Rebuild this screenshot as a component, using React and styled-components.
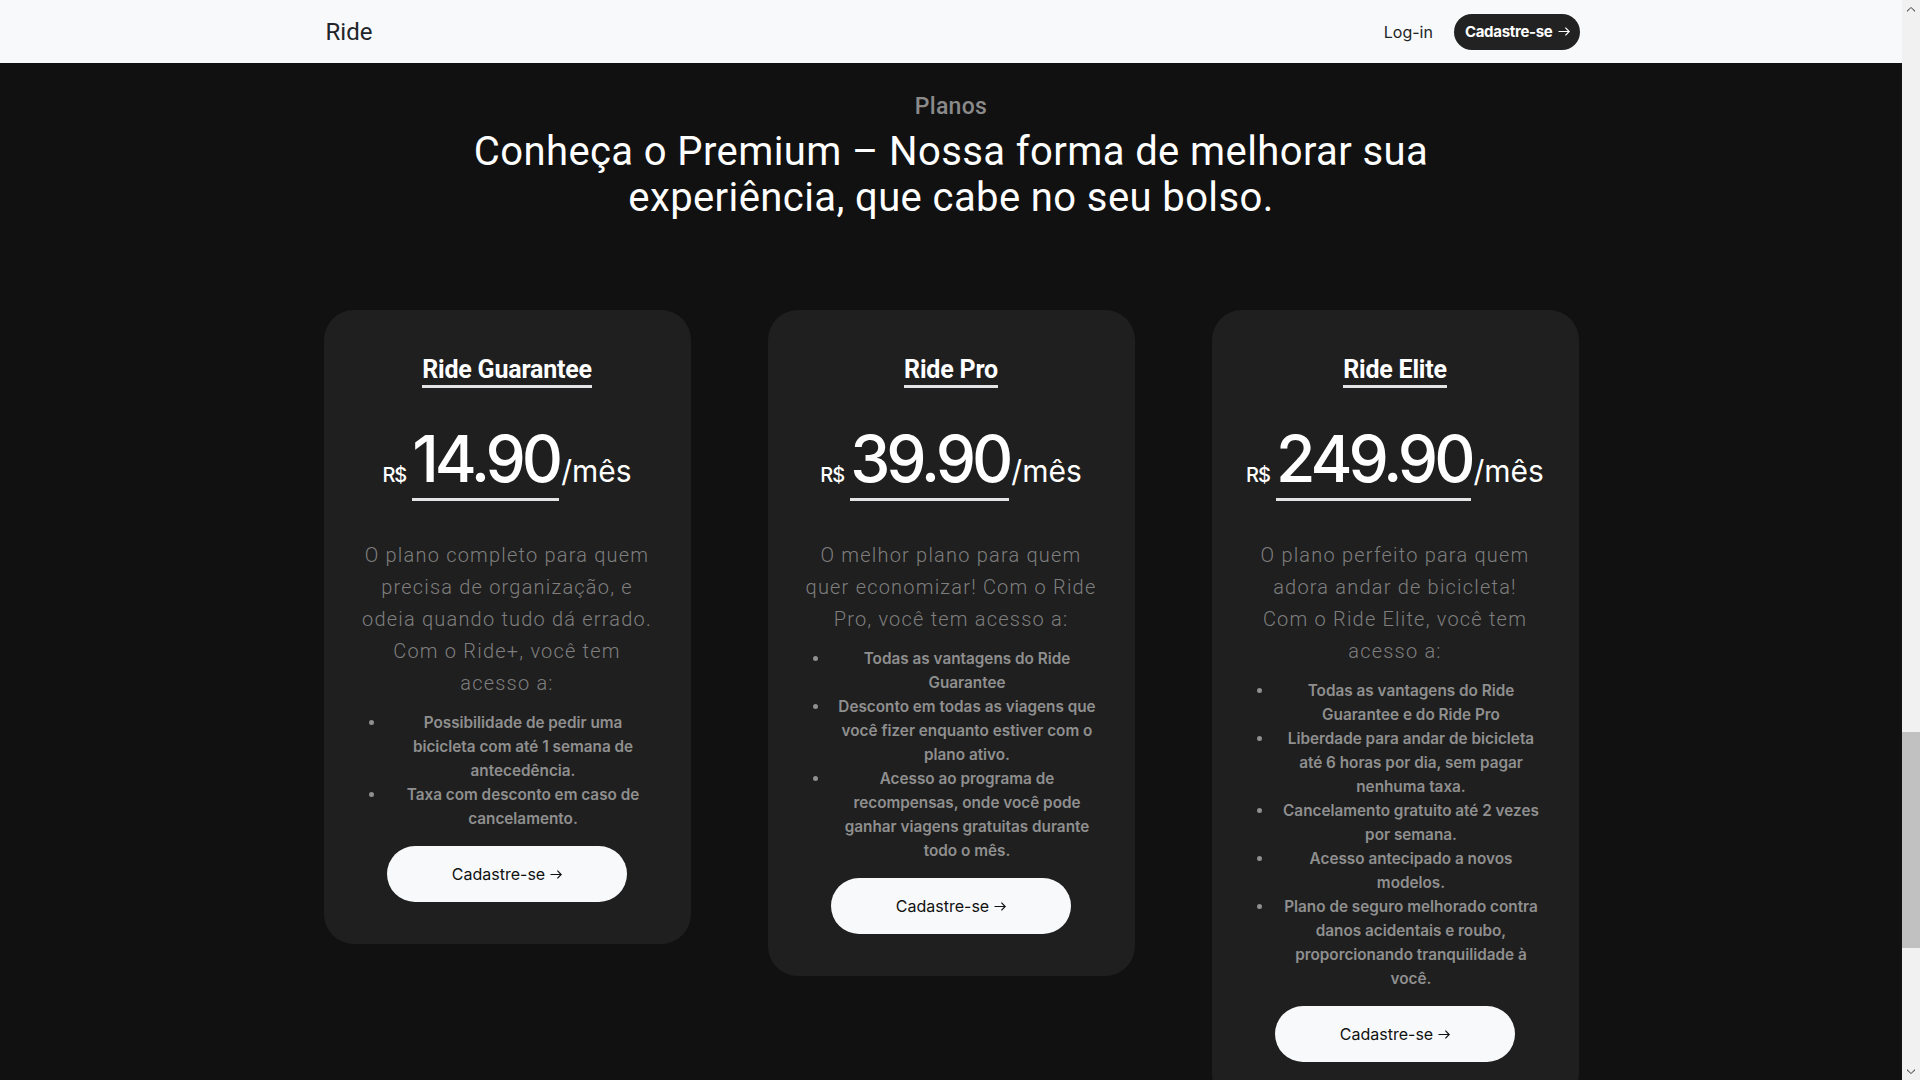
import React from "react";
import styled, { createGlobalStyle } from "styled-components";

// texto quebrado linha a linha, como no layout aprovado
const plans = [
  {
    name: "Ride Guarantee",
    price: "14.90",
    description: [
      "O plano completo para quem",
      "precisa de organização, e",
      "odeia quando tudo dá errado.",
      "Com o Ride+, você tem",
      "acesso a:",
    ],
    perks: [
      ["Possibilidade de pedir uma", "bicicleta com até 1 semana de", "antecedência."],
      ["Taxa com desconto em caso de", "cancelamento."],
    ],
  },
  {
    name: "Ride Pro",
    price: "39.90",
    description: [
      "O melhor plano para quem",
      "quer economizar! Com o Ride",
      "Pro, você tem acesso a:",
    ],
    perks: [
      ["Todas as vantagens do Ride", "Guarantee"],
      ["Desconto em todas as viagens que", "você fizer enquanto estiver com o", "plano ativo."],
      [
        "Acesso ao programa de",
        "recompensas, onde você pode",
        "ganhar viagens gratuitas durante",
        "todo o mês.",
      ],
    ],
  },
  {
    name: "Ride Elite",
    price: "249.90",
    description: [
      "O plano perfeito para quem",
      "adora andar de bicicleta!",
      "Com o Ride Elite, você tem",
      "acesso a:",
    ],
    perks: [
      ["Todas as vantagens do Ride", "Guarantee e do Ride Pro"],
      ["Liberdade para andar de bicicleta", "até 6 horas por dia, sem pagar", "nenhuma taxa."],
      ["Cancelamento gratuito até 2 vezes", "por semana."],
      ["Acesso antecipado a novos", "modelos."],
      [
        "Plano de seguro melhorado contra",
        "danos acidentais e roubo,",
        "proporcionando tranquilidade à",
        "você.",
      ],
    ],
  },
];

function Lines({ lines }) {
  return lines.map((line, i) => (
    <React.Fragment key={line}>
      {i > 0 && <br />}
      {line}
    </React.Fragment>
  ));
}

function ArrowIcon() {
  return (
    <ArrowSvg viewBox="0 0 12 9" aria-hidden="true">
      <path d="M0.5 4.5H11.2M7.4 0.7L11.2 4.5L7.4 8.3" />
    </ArrowSvg>
  );
}

function Chevron({ down }) {
  return (
    <ChevronSvg viewBox="0 0 8 5" $down={down} aria-hidden="true">
      <path d="M0 5L4 1L8 5L8 3.6L4 0L0 3.6Z" />
    </ChevronSvg>
  );
}

function App() {
  return (
    <Page>
      <GlobalStyle />
      <Main>
        <Nav>
          <NavInner>
            <Brand>Ride</Brand>
            <NavActions>
              <LoginLink href="#">Log-in</LoginLink>
              <NavButton>
                Cadastre-se
                <ArrowIcon />
              </NavButton>
            </NavActions>
          </NavInner>
        </Nav>

        <PlansSection>
          <Eyebrow>Planos</Eyebrow>
          <Heading>
            Conheça o Premium – Nossa forma de melhorar sua
            <br />
            experiência, que cabe no seu bolso.
          </Heading>

          <CardRow>
            {plans.map((plan) => (
              <Card key={plan.name}>
                <CardTitle>{plan.name}</CardTitle>
                <PriceRow>
                  <Currency>R$</Currency>
                  <Amount>{plan.price}</Amount>
                  <Period>/mês</Period>
                </PriceRow>
                <Description>
                  <Lines lines={plan.description} />
                </Description>
                <PerkList>
                  {plan.perks.map((perk) => (
                    <li key={perk[0]}>
                      <Lines lines={perk} />
                    </li>
                  ))}
                </PerkList>
                <SignupButton>
                  Cadastre-se
                  <ArrowIcon />
                </SignupButton>
              </Card>
            ))}
          </CardRow>
        </PlansSection>
      </Main>

      <ScrollRail>
        <RailButton>
          <Chevron />
        </RailButton>
        <RailTrack>
          <RailThumb />
        </RailTrack>
        <RailButton>
          <Chevron down />
        </RailButton>
      </ScrollRail>
    </Page>
  );
}

const GlobalStyle = createGlobalStyle`
  body {
    margin: 0;
    overflow: hidden;
    background: #111111;
    font-family: Inter, "Noto Sans", sans-serif;
  }
  * {
    box-sizing: border-box;
  }
`;

const Page = styled.div`
  display: flex;
  align-items: flex-start;
  background: #111111;
`;

const Main = styled.div`
  flex: 1;
  min-width: 0;
`;

const ScrollRail = styled.div`
  position: sticky;
  top: 0;
  flex: none;
  width: 18px;
  height: 100vh;
  background: #f1f1f1;
  display: flex;
  flex-direction: column;
`;

const RailButton = styled.div`
  height: 18px;
  display: flex;
  align-items: center;
  justify-content: center;
`;

const RailTrack = styled.div`
  flex: 1;
  padding-top: 714px;
`;

const RailThumb = styled.div`
  height: 216px;
  background: #c1c1c1;
`;

const ChevronSvg = styled.svg`
  width: 8px;
  height: 5px;
  fill: #505050;
  transform: ${(p) => (p.$down ? "rotate(180deg)" : "none")};
`;

const Nav = styled.header`
  position: sticky;
  top: 0;
  z-index: 10;
  height: 63px;
  background: #f8f9fa;
`;

const NavInner = styled.div`
  max-width: 1257px;
  height: 100%;
  margin: 0 auto;
  display: flex;
  align-items: center;
  justify-content: space-between;
`;

const Brand = styled.span`
  padding-left: 3px;
  font-family: Roboto, sans-serif;
  font-size: 24px;
  color: #212529;
`;

const NavActions = styled.div`
  display: flex;
  align-items: center;
  gap: 21px;
`;

const LoginLink = styled.a`
  font-family: Inter, sans-serif;
  font-size: 16px;
  color: #212529;
  text-decoration: none;
`;

const ArrowSvg = styled.svg`
  width: 12px;
  height: 9px;
  margin-left: 5px;
  fill: none;
  stroke: currentColor;
  stroke-width: 1.2;
`;

const NavButton = styled.button`
  height: 36px;
  padding: 0 10px 0 11px;
  border: none;
  border-radius: 18px;
  background: #222222;
  color: #ffffff;
  display: flex;
  align-items: center;
  font-family: Inter, sans-serif;
  font-size: 15px;
  font-weight: 700;
  letter-spacing: -0.3px;
`;

const PlansSection = styled.section`
  padding: 30px 0 60px;
  display: flex;
  flex-direction: column;
  align-items: center;
`;

const Eyebrow = styled.p`
  margin: 0;
  font-family: Roboto, sans-serif;
  font-size: 23px;
  font-weight: 500;
  line-height: 28px;
  letter-spacing: 0.3px;
  color: #8a8a8a;
`;

const Heading = styled.h2`
  margin: 8px 0 0;
  font-family: Roboto, sans-serif;
  font-size: 40px;
  font-weight: 400;
  line-height: 46px;
  letter-spacing: 0.4px;
  text-align: center;
  color: #ffffff;
`;

const CardRow = styled.div`
  width: 100%;
  max-width: 1255px;
  margin: 89px auto 0;
  display: grid;
  grid-template-columns: repeat(3, minmax(0, 1fr));
  align-items: start;
  gap: 77px;
`;

const Card = styled.article`
  min-width: 0;
  padding: 45px 40px 42px;
  border-radius: 30px;
  background: #1f1f1f;
  display: flex;
  flex-direction: column;
  align-items: center;
  text-align: center;
`;

const CardTitle = styled.h3`
  margin: 0;
  border-bottom: 3px solid #e4e4e7;
  font-family: Roboto, sans-serif;
  font-size: 25px;
  font-weight: 700;
  line-height: 30px;
  letter-spacing: -0.2px;
  color: #ffffff;
`;

const PriceRow = styled.div`
  margin-top: 39px;
  display: flex;
  align-items: baseline;
  color: #ffffff;
`;

const Currency = styled.span`
  margin-right: 6px;
  font-size: 20px;
  font-weight: 500;
  letter-spacing: -1px;
`;

const Amount = styled.span`
  padding-bottom: 7px;
  border-bottom: 3px solid #e4e4e7;
  font-size: 64px;
  font-weight: 500;
  line-height: 64px;
  letter-spacing: -4px;
`;

const Period = styled.span`
  margin-left: 2px;
  font-size: 30px;
  font-weight: 400;
`;

const Description = styled.p`
  align-self: stretch;
  margin: 38px -12px 0;
  font-family: Roboto, sans-serif;
  font-size: 20px;
  font-weight: 300;
  line-height: 32px;
  letter-spacing: 1.2px;
  white-space: nowrap;
  color: #7e7e7e;
`;

const PerkList = styled.ul`
  align-self: stretch;
  margin: 12px -10px 14px;
  padding-left: 32px;
  font-size: 15.3px;
  font-weight: 600;
  line-height: 24px;
  white-space: nowrap;
  color: #8f8f8f;
`;

const SignupButton = styled.button`
  width: 240px;
  height: 56px;
  margin-top: 1px;
  border: none;
  border-radius: 28px;
  background: #f8f9fa;
  color: #111111;
  display: flex;
  align-items: center;
  justify-content: center;
  font-family: Inter, sans-serif;
  font-size: 16px;
  font-weight: 400;
`;

export default App;
